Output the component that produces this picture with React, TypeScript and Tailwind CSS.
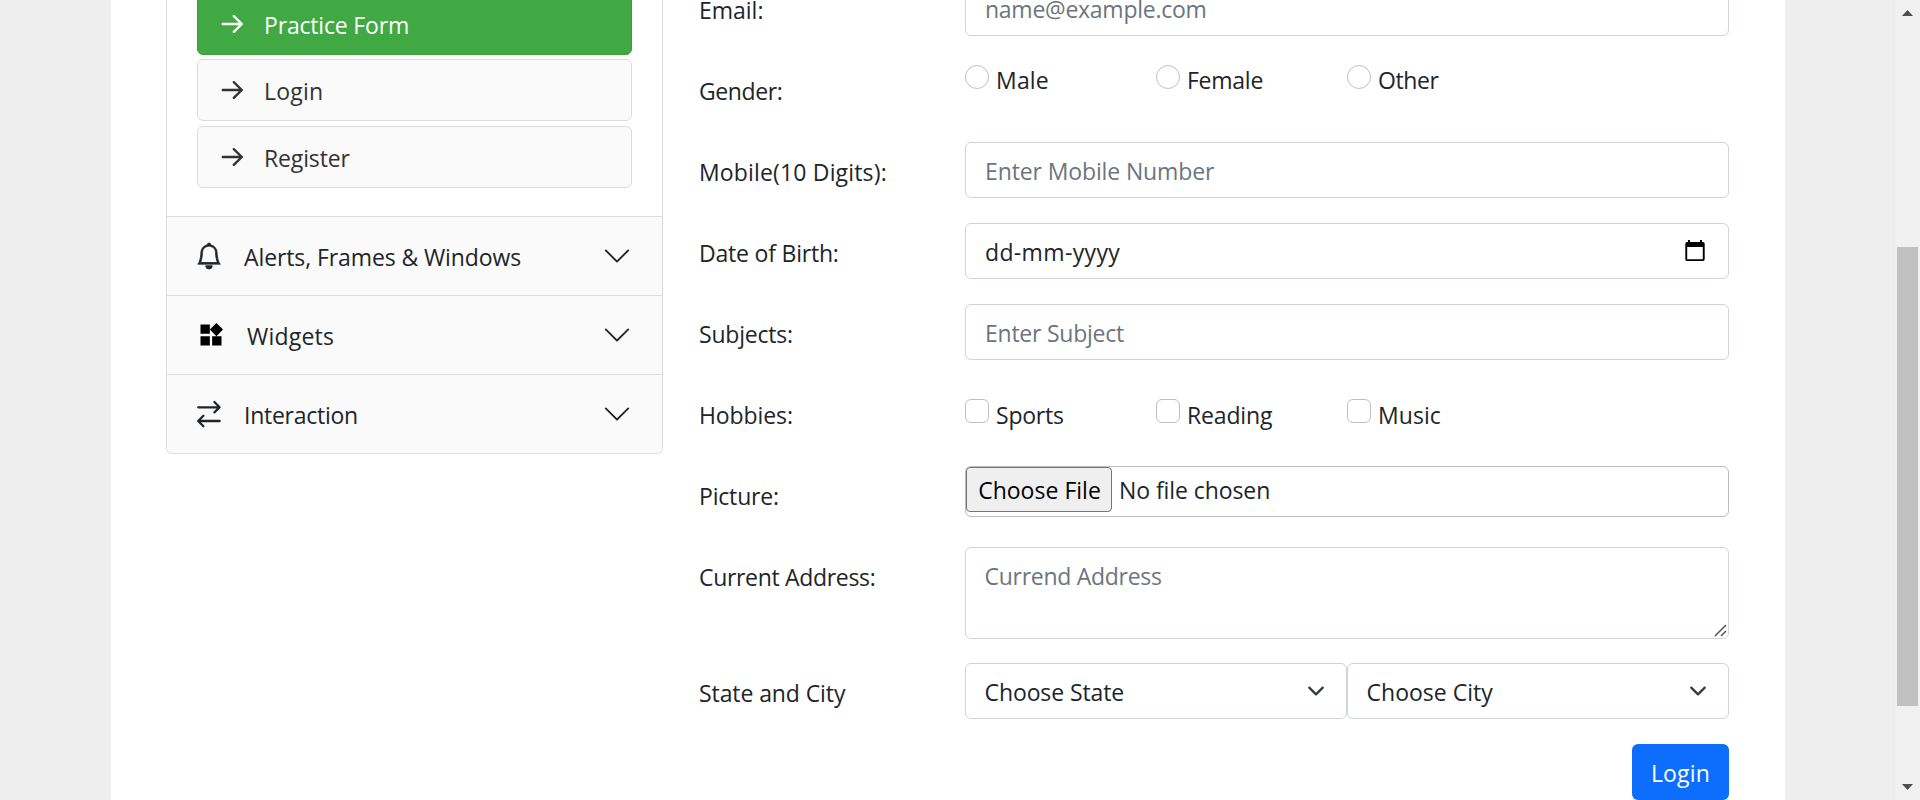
import React from "react";
import { BsBell, BsChevronDown } from "react-icons/bs";
import { MdWidgets } from "react-icons/md";

function ArrowIcon() {
  return (
    <svg className="h-[26px] w-[26px] shrink-0" viewBox="0 0 26 26" fill="none" stroke="currentColor" strokeWidth="2.4" strokeLinecap="round" strokeLinejoin="round">
      <path d="M2.8 13H21.8M13.8 5.2L21.8 13L13.8 20.8" />
    </svg>
  );
}

function SwapIcon() {
  return (
    <svg className="h-7 w-[26px] shrink-0" viewBox="0 0 26 28" fill="none" stroke="currentColor" strokeWidth="2.3" strokeLinecap="round" strokeLinejoin="round">
      <path d="M2.2 7.3H23.6M18.4 2L23.6 7.3L18.4 12.4M23.6 21H2.2M7.4 15.8L2.2 21L7.4 26.2" />
    </svg>
  );
}

function NavItem({ label, active, spacing }: { label: string; active?: boolean; spacing: string }) {
  const look = active
    ? "h-[75px] mb-1 pt-[13px] border-[#36a13a] bg-[#41a944] text-white"
    : "h-[62px] mb-[5px] border-[#dcdcdc] bg-[#fafafa] text-[#333]";
  return (
    <a className={`flex items-center gap-[18px] rounded-[6px] border pl-[22px] ${look}`}>
      <ArrowIcon />
      <span className={`pt-0.5 ${spacing}`}>{label}</span>
    </a>
  );
}

function AccordionHeader({ icon, label, labelClass }: { icon: React.ReactNode; label: string; labelClass: string }) {
  return (
    <div className="flex h-[79px] items-center border-t border-[#dcddde] bg-[#fafafa] pl-[29px] pr-[30px]">
      <span className="flex w-12 shrink-0 items-center">{icon}</span>
      <span className={`grow pt-0.5 ${labelClass}`}>{label}</span>
      <BsChevronDown className="h-[30px] w-[30px] text-[#212529]" />
    </div>
  );
}

function Row({ label, labelClass, children }: { label: string; labelClass: string; children: React.ReactNode }) {
  return (
    <div className="flex items-start">
      <label className={`flex h-14 w-[267px] shrink-0 items-center pl-px pt-1 ${labelClass}`}>{label}</label>
      <div className="w-[764px]">{children}</div>
    </div>
  );
}

const field =
  "block h-14 w-full rounded-[6px] border border-[#ced4da] bg-white pl-[19px] pt-0.5 outline-none placeholder:text-[#6c757d] placeholder:opacity-100";

function Choices({ items, round }: { items: { name: string; spacing: string }[]; round?: boolean }) {
  return (
    <div className={`flex h-14 ${round ? "items-start pt-1" : "items-center pt-0"}`}>
      {items.map((item) => (
        <label key={item.name} className="flex w-[191px] items-start gap-[7px]">
          <span className={`h-6 w-6 shrink-0 border border-[#bfbfbf] bg-white ${round ? "rounded-full" : "mt-[3px] rounded-[6px]"}`} />
          <span className={`leading-8 ${round ? "-mt-px" : "mt-[3px]"} ${item.spacing}`}>{item.name}</span>
        </label>
      ))}
    </div>
  );
}

function Select({ label, spacing }: { label: string; spacing: string }) {
  return (
    <div className="flex h-14 w-[382px] items-center justify-between rounded-[6px] border border-[#ced4da] pl-[18.5px] pr-[21px]">
      <span className={`pt-px ${spacing}`}>{label}</span>
      <svg className="h-[18px] w-[18px]" viewBox="0 0 16 16" fill="none" stroke="#343a40" strokeWidth="2" strokeLinecap="round" strokeLinejoin="round">
        <path d="m2 5 6 6 6-6" />
      </svg>
    </div>
  );
}

function CalendarIcon() {
  return (
    <svg className="-mt-0.5 h-6 w-6" viewBox="0 0 24 24">
      <path fill="#000" fillRule="evenodd" d="M5 1h2v2h10V1h2v2h1a2 2 0 0 1 1.7 1.8V20.2A1.8 1.8 0 0 1 20 22H4a1.8 1.8 0 0 1-1.7-1.8V4.8A2 2 0 0 1 4 3h1zM4.2 8v12.2h15.6V8z" />
    </svg>
  );
}

export default function App() {
  return (
    <div className="flex h-[800px] w-full overflow-hidden bg-[#eee] pl-[111px] font-['Open_Sans','Noto_Sans',sans-serif] text-[23px] leading-9 text-[#212529]">
      <main className="flex w-[1674px] shrink-0 items-start bg-white pl-[55px]">
        <aside className="w-[497px] shrink-0 overflow-hidden rounded-b-[6px] border border-t-0 border-[#dcddde]">
          <nav className="-mt-5 flex h-[236px] flex-col px-[30px]">
            <NavItem label="Practice Form" active spacing="tracking-[-0.18px]" />
            <NavItem label="Login" spacing="tracking-[0.2px]" />
            <NavItem label="Register" spacing="tracking-[-0.14px]" />
          </nav>
          <AccordionHeader
            icon={<BsBell className="h-[26px] w-[26px] overflow-visible" stroke="currentColor" strokeWidth="0.5" />}
            label="Alerts, Frames & Windows"
            labelClass="tracking-[-0.1px]"
          />
          <AccordionHeader
            icon={<MdWidgets className="ml-px h-7 w-7 text-black" />}
            label="Widgets"
            labelClass="pl-[3px] tracking-[0.2px]"
          />
          <AccordionHeader
            icon={<SwapIcon />}
            label="Interaction"
            labelClass="tracking-[-0.26px]"
          />
        </aside>

        <form className="-mt-5 ml-[35px] flex flex-col gap-[25px]">
          <Row label="Email:" labelClass="tracking-[-0.01px]">
            <input className={`${field} tracking-[-0.26px]`} placeholder="name@example.com" />
          </Row>
          <Row label="Gender:" labelClass="tracking-[-0.4px]">
            <Choices
              round
              items={[
                { name: "Male", spacing: "tracking-[0.2px]" },
                { name: "Female", spacing: "tracking-[-0.25px]" },
                { name: "Other", spacing: "tracking-[-0.4px]" },
              ]}
            />
          </Row>
          <Row label="Mobile(10 Digits):" labelClass="tracking-[0.16px]">
            <input className={`${field} tracking-[-0.12px]`} placeholder="Enter Mobile Number" />
          </Row>
          <Row label="Date of Birth:" labelClass="tracking-[-0.2px]">
            <div className={`${field} flex items-center justify-between pr-[21px]`}>
              <span className="tracking-[0.36px]">dd-mm-yyyy</span>
              <CalendarIcon />
            </div>
          </Row>
          <Row label="Subjects:" labelClass="tracking-[-0.21px]">
            <input className={`${field} tracking-[-0.24px]`} placeholder="Enter Subject" />
          </Row>
          <Row label="Hobbies:" labelClass="tracking-[-0.09px]">
            <Choices
              items={[
                { name: "Sports", spacing: "tracking-[-0.22px]" },
                { name: "Reading", spacing: "tracking-[-0.15px]" },
                { name: "Music", spacing: "tracking-[0.05px]" },
              ]}
            />
          </Row>
          <Row label="Picture:" labelClass="tracking-[-0.18px]">
            <div className="flex h-[51px] items-start gap-[7px] rounded-[6px] border border-[#bbb]">
              <button type="button" className="h-[45px] w-[146px] rounded-[4px] border border-[#767676] bg-[#efefef] pl-px text-black tracking-[0.02px]">
                Choose File
              </button>
              <span className="pt-[5px] tracking-[-0.08px]">No file chosen</span>
            </div>
          </Row>
          <Row label="Current Address:" labelClass="tracking-[-0.32px]">
            <div className="relative -mb-px h-[92px] rounded-[6px] border border-[#ced4da] pl-[18.5px] pt-[10px] text-[#6c757d] tracking-[-0.28px]">
              Currend Address
              <svg className="absolute bottom-px right-px h-[13px] w-[13px]" viewBox="0 0 13 13" stroke="#555" strokeWidth="1.5">
                <path d="M1 12L12 1M7 12L12 7" />
              </svg>
            </div>
          </Row>
          <Row label="State and City" labelClass="tracking-[-0.09px]">
            <div className="flex">
              <Select label="Choose State" spacing="tracking-[-0.1px]" />
              <Select label="Choose City" spacing="tracking-[0.02px]" />
            </div>
          </Row>
          <button type="button" className="h-14 w-[97px] self-end rounded-[6px] bg-[#0d6efd] pt-0.5 text-white tracking-[0.2px]">
            Login
          </button>
        </form>
      </main>

      <div className="ml-auto flex w-[25px] shrink-0 flex-col items-center bg-[#f1f1f1]">
        <svg className="mt-[9px] h-[8px] w-[11px]" viewBox="0 0 11 8" fill="#505050">
          <path d="M0 7L5.5 1L11 7z" />
        </svg>
        <div className="mt-[230px] h-[459px] w-[21px] bg-[#c1c1c1]" />
        <svg className="mt-[77px] h-[8px] w-[11px]" viewBox="0 0 11 8" fill="#505050">
          <path d="M0 1L11 1L5.5 7z" />
        </svg>
      </div>
    </div>
  );
}
